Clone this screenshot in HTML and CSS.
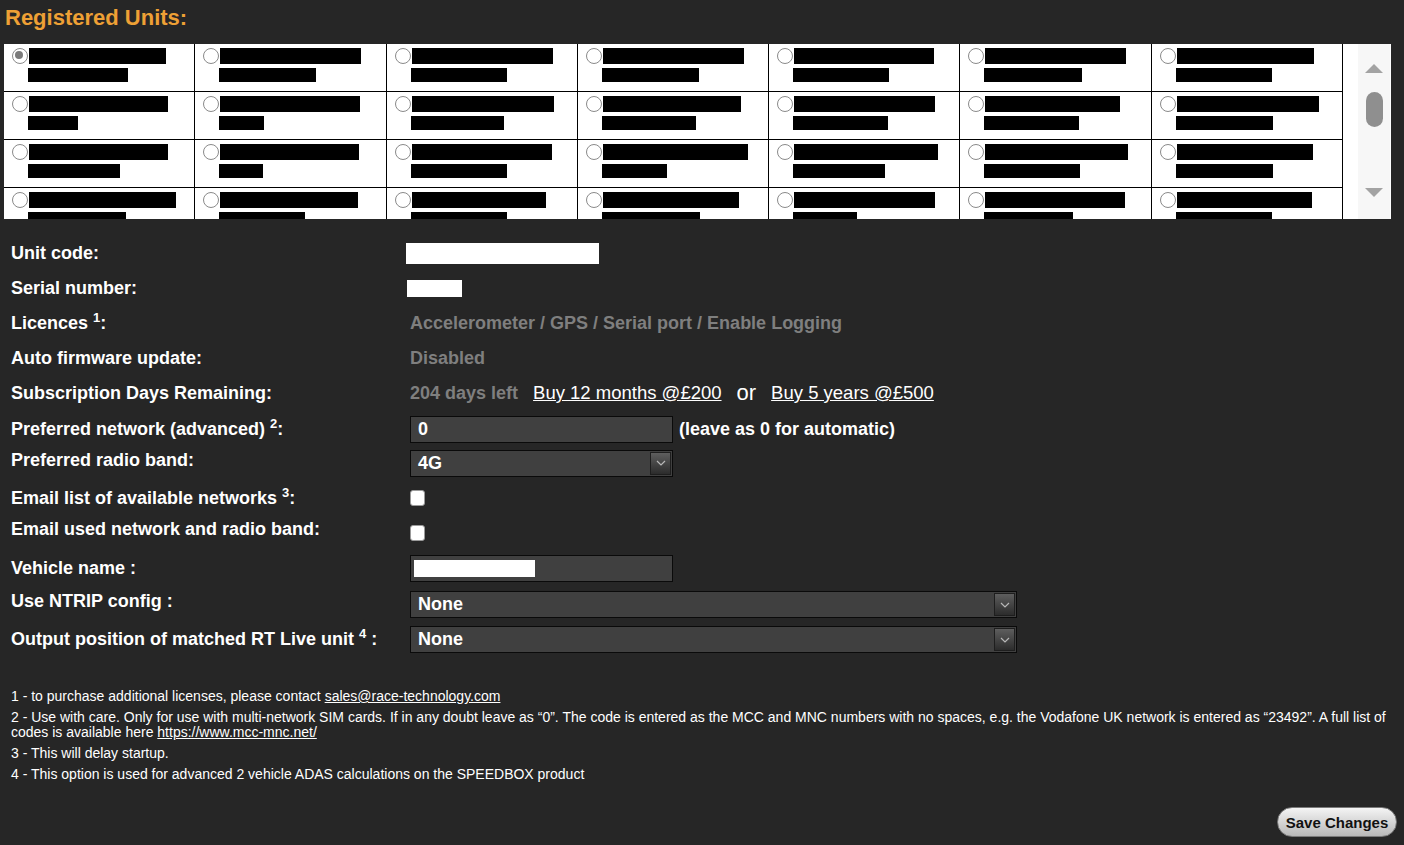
FILE: index.html
```html
<!DOCTYPE html>
<html>
<head>
<meta charset="utf-8">
<title>Registered Units</title>
<link rel="stylesheet" href="styles.css">
</head>
<body>
<h1 class="title">Registered Units:</h1>

<div class="units">
  <div class="units-grid">
    <div class="cell"><div class="line"><span class="radio checked"></span><span class="bar big" style="width:137px"></span></div><span class="bar small" style="width:100px"></span></div>
    <div class="cell"><div class="line"><span class="radio"></span><span class="bar big" style="width:141px"></span></div><span class="bar small" style="width:97px"></span></div>
    <div class="cell"><div class="line"><span class="radio"></span><span class="bar big" style="width:141px"></span></div><span class="bar small" style="width:96px"></span></div>
    <div class="cell"><div class="line"><span class="radio"></span><span class="bar big" style="width:141px"></span></div><span class="bar small" style="width:97px"></span></div>
    <div class="cell"><div class="line"><span class="radio"></span><span class="bar big" style="width:140px"></span></div><span class="bar small" style="width:96px"></span></div>
    <div class="cell"><div class="line"><span class="radio"></span><span class="bar big" style="width:141px"></span></div><span class="bar small" style="width:98px"></span></div>
    <div class="cell"><div class="line"><span class="radio"></span><span class="bar big" style="width:137px"></span></div><span class="bar small" style="width:96px"></span></div>

    <div class="cell"><div class="line"><span class="radio"></span><span class="bar big" style="width:139px"></span></div><span class="bar small" style="width:50px"></span></div>
    <div class="cell"><div class="line"><span class="radio"></span><span class="bar big" style="width:140px"></span></div><span class="bar small" style="width:45px"></span></div>
    <div class="cell"><div class="line"><span class="radio"></span><span class="bar big" style="width:142px"></span></div><span class="bar small" style="width:93px"></span></div>
    <div class="cell"><div class="line"><span class="radio"></span><span class="bar big" style="width:138px"></span></div><span class="bar small" style="width:94px"></span></div>
    <div class="cell"><div class="line"><span class="radio"></span><span class="bar big" style="width:141px"></span></div><span class="bar small" style="width:95px"></span></div>
    <div class="cell"><div class="line"><span class="radio"></span><span class="bar big" style="width:135px"></span></div><span class="bar small" style="width:95px"></span></div>
    <div class="cell"><div class="line"><span class="radio"></span><span class="bar big" style="width:142px"></span></div><span class="bar small" style="width:97px"></span></div>

    <div class="cell"><div class="line"><span class="radio"></span><span class="bar big" style="width:139px"></span></div><span class="bar small" style="width:92px"></span></div>
    <div class="cell"><div class="line"><span class="radio"></span><span class="bar big" style="width:139px"></span></div><span class="bar small" style="width:44px"></span></div>
    <div class="cell"><div class="line"><span class="radio"></span><span class="bar big" style="width:140px"></span></div><span class="bar small" style="width:96px"></span></div>
    <div class="cell"><div class="line"><span class="radio"></span><span class="bar big" style="width:145px"></span></div><span class="bar small" style="width:65px"></span></div>
    <div class="cell"><div class="line"><span class="radio"></span><span class="bar big" style="width:144px"></span></div><span class="bar small" style="width:92px"></span></div>
    <div class="cell"><div class="line"><span class="radio"></span><span class="bar big" style="width:143px"></span></div><span class="bar small" style="width:96px"></span></div>
    <div class="cell"><div class="line"><span class="radio"></span><span class="bar big" style="width:136px"></span></div><span class="bar small" style="width:97px"></span></div>

    <div class="cell"><div class="line"><span class="radio"></span><span class="bar big" style="width:147px"></span></div><span class="bar small" style="width:98px"></span></div>
    <div class="cell"><div class="line"><span class="radio"></span><span class="bar big" style="width:138px"></span></div><span class="bar small" style="width:86px"></span></div>
    <div class="cell"><div class="line"><span class="radio"></span><span class="bar big" style="width:134px"></span></div><span class="bar small" style="width:96px"></span></div>
    <div class="cell"><div class="line"><span class="radio"></span><span class="bar big" style="width:136px"></span></div><span class="bar small" style="width:98px"></span></div>
    <div class="cell"><div class="line"><span class="radio"></span><span class="bar big" style="width:141px"></span></div><span class="bar small" style="width:64px"></span></div>
    <div class="cell"><div class="line"><span class="radio"></span><span class="bar big" style="width:140px"></span></div><span class="bar small" style="width:89px"></span></div>
    <div class="cell"><div class="line"><span class="radio"></span><span class="bar big" style="width:135px"></span></div><span class="bar small" style="width:96px"></span></div>
  </div>
  <div class="scrollbar">
    <span class="arrow up"></span>
    <span class="thumb"></span>
    <span class="arrow down"></span>
  </div>
</div>

<div class="settings">
  <div class="label">Unit code:</div>
  <div class="value"><span class="redact code"></span></div>

  <div class="label">Serial number:</div>
  <div class="value"><span class="redact serial"></span></div>

  <div class="label">Licences <sup>1</sup>:</div>
  <div class="value muted">Accelerometer / GPS / Serial port / Enable Logging</div>

  <div class="label">Auto firmware update:</div>
  <div class="value muted">Disabled</div>

  <div class="label">Subscription Days Remaining:</div>
  <div class="value"><span class="muted">204 days left</span><a class="buy" href="#">Buy 12 months @£200</a><span class="or">or</span><a class="buy" href="#">Buy 5 years @£500</a></div>

  <div class="label">Preferred network (advanced) <sup>2</sup>:</div>
  <div class="value"><div class="field short">0</div><span class="hint">(leave as 0 for automatic)</span></div>

  <div class="label raised">Preferred radio band:</div>
  <div class="value"><div class="field short select"><span>4G</span><span class="drop"><svg width="10" height="6" viewBox="0 0 10 6"><path d="M1 1 L5 5 L9 1" fill="none" stroke="#b8b8b8" stroke-width="1.2"/></svg></span></div></div>

  <div class="label">Email list of available networks <sup>3</sup>:</div>
  <div class="value"><span class="check"></span></div>

  <div class="label raised">Email used network and radio band:</div>
  <div class="value"><span class="check"></span></div>

  <div class="label">Vehicle name :</div>
  <div class="value"><div class="field short"><span class="redact vehicle"></span></div></div>

  <div class="label raised">Use NTRIP config :</div>
  <div class="value"><div class="field long select"><span>None</span><span class="drop"><svg width="10" height="6" viewBox="0 0 10 6"><path d="M1 1 L5 5 L9 1" fill="none" stroke="#b8b8b8" stroke-width="1.2"/></svg></span></div></div>

  <div class="label">Output position of matched RT Live unit <sup>4</sup> :</div>
  <div class="value"><div class="field long select"><span>None</span><span class="drop"><svg width="10" height="6" viewBox="0 0 10 6"><path d="M1 1 L5 5 L9 1" fill="none" stroke="#b8b8b8" stroke-width="1.2"/></svg></span></div></div>
</div>

<div class="notes">
  <p>1 - to purchase additional licenses, please contact <a href="#">sales@race-technology.com</a></p>
  <p>2 - Use with care. Only for use with multi-network SIM cards. If in any doubt leave as “0”. The code is entered as the MCC and MNC numbers with no spaces, e.g. the Vodafone UK network is entered as “23492”. A full list of codes is available here <a href="#">https://www.mcc-mnc.net/</a></p>
  <p>3 - This will delay startup.</p>
  <p>4 - This option is used for advanced 2 vehicle ADAS calculations on the SPEEDBOX product</p>
</div>

<div class="actions">
  <button class="save" type="button">Save Changes</button>
</div>
</body>
</html>
```

FILE: styles.css
```css
html, body {
  margin: 0;
  padding: 0;
  background: #262626;
  color: #ffffff;
  font-family: "Liberation Sans", Arial, sans-serif;
}

.title {
  margin: 0;
  padding: 5px 0 0 5px;
  height: 44px;
  box-sizing: border-box;
  font-size: 22px;
  font-weight: bold;
  color: #eea035;
  line-height: 26px;
}

.units {
  margin-left: 4px;
  width: 1387px;
  height: 175px;
  background: #ffffff;
  display: flex;
  overflow: hidden;
}

.units-grid {
  width: 1339px;
  display: grid;
  grid-template-columns: repeat(7, 1fr);
  grid-auto-rows: 48px;
  align-content: start;
}

.cell {
  border-right: 1px solid #000;
  border-bottom: 1px solid #000;
  padding: 4px 0 0 8px;
  box-sizing: border-box;
}

.line {
  display: flex;
  align-items: flex-start;
}

.radio {
  width: 16px;
  height: 16px;
  box-sizing: border-box;
  border: 1.6px solid #8a8a8a;
  border-radius: 50%;
  background: #fff;
  flex: none;
  position: relative;
}

.radio.checked::after {
  content: "";
  position: absolute;
  left: 2.4px;
  top: 2.4px;
  width: 8px;
  height: 8px;
  border-radius: 50%;
  background: #7a7a7a;
}

.bar {
  display: block;
  background: #000;
}

.bar.big {
  height: 16px;
  margin-left: 1px;
}

.bar.small {
  height: 14px;
  margin: 4px 0 0 16px;
}

.scrollbar {
  margin-left: 15px;
  width: 32px;
  background: #f7f7f7;
  position: relative;
}

.arrow {
  position: absolute;
  left: 7px;
  width: 0;
  height: 0;
  border-left: 9px solid transparent;
  border-right: 9px solid transparent;
}

.arrow.up {
  top: 20px;
  border-bottom: 9px solid #a3a3a3;
}

.arrow.down {
  top: 144px;
  border-top: 9px solid #a3a3a3;
}

.thumb {
  position: absolute;
  left: 8px;
  top: 48px;
  width: 17px;
  height: 35px;
  border-radius: 9px;
  background: #8f8f8f;
}

.settings {
  margin-top: 16px;
  display: grid;
  grid-template-columns: 406px 1fr;
  grid-template-rows: 36px 35px 35px 34px 36px 36px 32px 38px 31px 41px 31px 39px;
  align-items: center;
  font-size: 18px;
  font-weight: bold;
}

.label {
  padding-left: 11px;
  white-space: nowrap;
}

.label.raised {
  margin-bottom: 6px;
}

.label sup {
  font-size: 13px;
  line-height: 0;
  vertical-align: 7px;
}

.value {
  display: flex;
  align-items: center;
}

.muted {
  color: #7f7f7f;
}

.value.muted {
  padding-left: 4px;
}

.value .muted {
  padding-left: 4px;
}

.buy {
  color: #ffffff;
  font-weight: normal;
  font-size: 18.5px;
  margin-left: 15px;
}

.or {
  font-weight: normal;
  font-size: 22px;
  margin-left: 15px;
  margin-right: 0;
}

.redact {
  display: block;
  background: #ffffff;
}

.redact.code {
  width: 193px;
  height: 21px;
}

.redact.serial {
  width: 55px;
  height: 17px;
  margin-left: 1px;
}

.redact.vehicle {
  width: 121px;
  height: 17px;
}

.field {
  margin-left: 4px;
  height: 27px;
  box-sizing: border-box;
  background: #404040;
  border: 1px solid #0a0a0a;
  display: flex;
  align-items: center;
  padding-left: 7px;
  color: #fff;
  font-size: 18px;
  font-weight: bold;
}

.field.short {
  width: 263px;
}

.field.long {
  width: 607px;
}

.field .redact.vehicle {
  margin-left: -4px;
}

.select {
  justify-content: space-between;
  padding-right: 1px;
}

.drop {
  width: 21px;
  height: 23px;
  box-sizing: border-box;
  background: linear-gradient(#5e5e5e, #2c2c2c);
  border: 1px solid #1e1e1e;
  display: flex;
  align-items: center;
  justify-content: center;
}

.hint {
  margin-left: 6px;
  color: #fff;
}

.check {
  margin-left: 4px;
  width: 15px;
  height: 16px;
  box-sizing: border-box;
  background: #fff;
  border: 1px solid #9a9a9a;
  border-radius: 3px;
}

.notes {
  margin-top: 30px;
  padding: 0 11px;
  font-size: 14px;
  line-height: 15px;
}

.notes p {
  margin: 0 0 6px;
}

.notes a {
  color: #fff;
}

.actions {
  display: flex;
  justify-content: flex-end;
  padding-right: 7px;
  margin-top: 25px;
}

.save {
  width: 120px;
  height: 30px;
  border-radius: 15px;
  border: 1px solid #7a7a7a;
  background: linear-gradient(#f4f4f4, #d0d0d0 60%, #b8b8b8);
  font-family: "Liberation Sans", Arial, sans-serif;
  font-weight: bold;
  font-size: 15px;
  color: #111;
  padding: 0;
}
```
